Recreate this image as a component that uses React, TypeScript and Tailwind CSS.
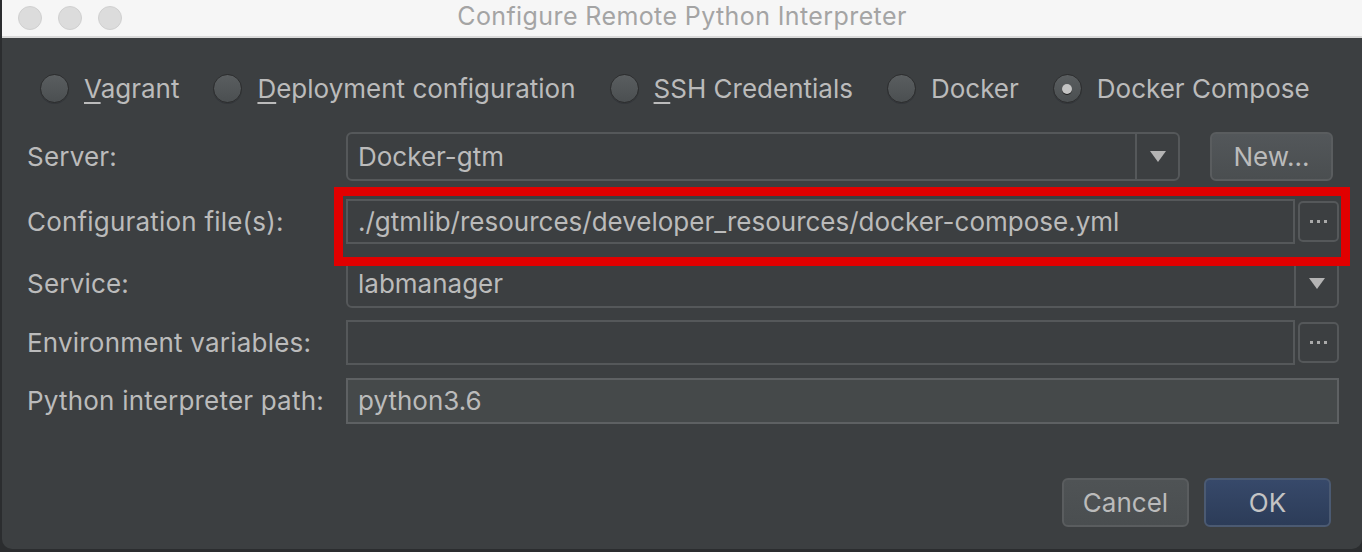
import React from "react";

const font = { fontFamily: "Inter, 'Liberation Sans', sans-serif" };

// Radio button with optional mnemonic underline
function Radio({ label, mnemonic, checked }: { label: string; mnemonic?: boolean; checked?: boolean }) {
  return (
    <div className="flex items-center gap-[15px]">
      <div className="w-[29px] h-[29px] rounded-full border border-[#2b2c2d] bg-gradient-to-b from-[#5a5e60] to-[#4b4f51] shadow-[0_1px_0_#33363a] flex items-center justify-center">
        {checked && <div className="w-[10px] h-[10px] rounded-full bg-[#c4c4c4] shadow-[0_1px_0_#222]" />}
      </div>
      <span className="text-[26px] text-[#bbbbbb] leading-none">
        {mnemonic ? (
          <>
            <span className="underline underline-offset-[4px] decoration-[1.5px]">{label[0]}</span>
            {label.slice(1)}
          </>
        ) : (
          label
        )}
      </span>
    </div>
  );
}

function Arrow() {
  return (
    <svg width="16" height="11" viewBox="0 0 16 11">
      <polygon points="0,0 16,0 8,11" fill="#b4b4b4" />
    </svg>
  );
}

function DotsButton() {
  return (
    <div className="w-[41px] h-[41px] ml-[3px] rounded-[5px] border-2 border-[#55585a] flex items-center justify-center gap-[4px]">
      <div className="w-[3px] h-[3px] bg-[#aaaaaa]" />
      <div className="w-[3px] h-[3px] bg-[#aaaaaa]" />
      <div className="w-[3px] h-[3px] bg-[#aaaaaa]" />
    </div>
  );
}

function Label({ children }: { children: React.ReactNode }) {
  return <div className="w-[319px] shrink-0 text-[26px] tracking-[0.2px] text-[#bbbbbb] leading-none">{children}</div>;
}

export default function App() {
  return (
    <div className="w-[1362px] h-[552px] bg-[#2b2d2f] overflow-hidden" style={font}>
      <div className="relative ml-[2px] w-[1360px] h-[549px] rounded-b-[10px] bg-[#3c3f41] flex flex-col">
        {/* Title bar */}
        <div className="relative h-[38px] bg-[#f6f6f6] border-b-2 border-[#d9d9d9] flex items-center px-[16px] gap-[16px]">
          <div className="w-[24px] h-[24px] rounded-full bg-[#dcdcdc] border border-[#d0d0d0]" />
          <div className="w-[24px] h-[24px] rounded-full bg-[#dcdcdc] border border-[#d0d0d0]" />
          <div className="w-[24px] h-[24px] rounded-full bg-[#dcdcdc] border border-[#d0d0d0]" />
          <div className="absolute inset-0 pb-[2px] flex items-center justify-center text-[25px] tracking-[0.4px] text-[#a4a4a4]">
            Configure Remote Python Interpreter
          </div>
        </div>

        {/* Interpreter type */}
        <div className="flex items-center gap-[34px] pl-[38px] mt-[36px]">
          <Radio label="Vagrant" mnemonic />
          <Radio label="Deployment configuration" mnemonic />
          <Radio label="SSH Credentials" mnemonic />
          <Radio label="Docker" />
          <Radio label="Docker Compose" checked />
        </div>

        {/* Form */}
        <div className="flex flex-col pl-[25px] pr-[23px] mt-[29px]">
          <div className="flex items-center h-[49px]">
            <Label>Server:</Label>
            <div className="flex-1 h-[49px] rounded-[6px] border-2 border-[#55585a] flex items-center">
              <div className="flex-1 px-[10px] text-[26px] text-[#bbbbbb]">Docker-gtm</div>
              <div className="w-[43px] h-full border-l-2 border-[#55585a] flex items-center justify-center">
                <Arrow />
              </div>
            </div>
            <div className="w-[123px] h-[49px] ml-[30px] mr-[6px] rounded-[6px] border-2 border-[#5a5d5f] bg-gradient-to-b from-[#53575a] to-[#4a4e50] flex items-center justify-center text-[26px] text-[#bbbbbb]">
              New...
            </div>
          </div>

          <div className="flex items-center h-[49px] mt-[16px]">
            <Label>Configuration file(s):</Label>
            <div className="flex-1 h-[45px] border-2 border-[#55585a] flex items-center px-[10px] text-[26px] text-[#bbbbbb]">
              ./gtmlib/resources/developer_resources/docker-compose.yml
            </div>
            <DotsButton />
          </div>

          <div className="flex items-center h-[49px] mt-[13px]">
            <Label>Service:</Label>
            <div className="flex-1 h-[49px] rounded-[6px] border-2 border-[#55585a] flex items-center">
              <div className="flex-1 px-[10px] text-[26px] text-[#bbbbbb]">labmanager</div>
              <div className="w-[43px] h-full border-l-2 border-[#55585a] flex items-center justify-center">
                <Arrow />
              </div>
            </div>
          </div>

          <div className="flex items-center h-[49px] mt-[10px]">
            <Label>Environment variables:</Label>
            <div className="flex-1 h-[45px] border-2 border-[#55585a]" />
            <DotsButton />
          </div>

          <div className="flex items-center h-[49px] mt-[9px]">
            <Label>Python interpreter path:</Label>
            <div className="flex-1 h-[46px] border-2 border-[#5e6163] bg-[#45494a] flex items-center px-[10px] text-[26px] text-[#bbbbbb]">
              python3.6
            </div>
          </div>
        </div>

        {/* Buttons */}
        <div className="mt-auto mb-[22px] flex justify-end gap-[15px] pr-[31px]">
          <div className="w-[127px] h-[49px] rounded-[6px] border-2 border-[#5a5d5f] bg-gradient-to-b from-[#4f5355] to-[#4a4e50] flex items-center justify-center text-[26px] text-[#bbbbbb]">
            Cancel
          </div>
          <div className="w-[127px] h-[49px] rounded-[6px] border-2 border-[#4b5a72] bg-gradient-to-b from-[#37496a] to-[#2c3c58] flex items-center justify-center text-[26px] text-[#c4c4c4]">
            OK
          </div>
        </div>

        {/* Annotation highlight */}
        <div className="absolute left-[332px] top-[187px] w-[1016px] h-[79px] border-[9px] border-[#e10000]" />
      </div>
    </div>
  );
}
